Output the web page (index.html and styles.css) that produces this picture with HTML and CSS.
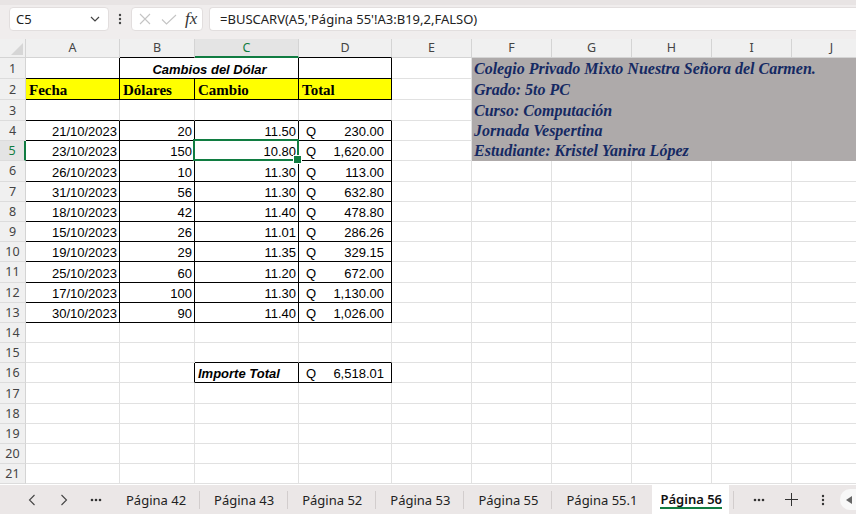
FILE: index.html
```html
<!DOCTYPE html>
<html>

<head>
  <meta content="width=device-width, initial-scale=1">
  <link rel="stylesheet" href="styles.css">
</head>

<body>
  <div class="topbar">
    <div class="namebox">
      <span>C5</span>
      <svg width="10" height="6" viewBox="0 0 10 6"><path d="M1 1l4 4 4-4" fill="none" stroke="#444" stroke-width="1.2"/></svg>
    </div>
    <div class="vdots">
      <svg width="4" height="12" viewBox="0 0 4 12"><circle cx="2" cy="2" r="1.2" fill="#444"/><circle cx="2" cy="6" r="1.2" fill="#444"/><circle cx="2" cy="10" r="1.2" fill="#444"/></svg>
    </div>
    <div class="fxbox">
      <svg width="12" height="12" viewBox="0 0 12 12"><path d="M1 1l10 10M11 1L1 11" stroke="#c4c4c4" stroke-width="1.1"/></svg>
      <svg width="16" height="11" viewBox="0 0 16 11"><path d="M1 5.5l4.5 4.5L15 1" fill="none" stroke="#c4c4c4" stroke-width="1.1"/></svg>
      <span class="fx">fx</span>
    </div>
    <div class="formula">=BUSCARV(A5,'Página 55'!A3:B19,2,FALSO)</div>
  </div>

  <div class="sheet">
    <div class="grid">
      <!-- column headers -->
      <div class="corner"></div>
      <div class="ch">A</div>
      <div class="ch dark">B</div>
      <div class="ch on">C</div>
      <div class="ch dark">D</div>
      <div class="ch">E</div>
      <div class="ch">F</div>
      <div class="ch">G</div>
      <div class="ch">H</div>
      <div class="ch">I</div>
      <div class="ch">J</div>

      <!-- 1 -->
      <div class="rh">1</div>
      <div class="c kr kb"></div>
      <div class="c kr kb ttl mid span2">Cambios del Dólar</div>
      <div class="c kr kb"></div>
      <div class="c"></div>
      <div class="info">Colegio Privado Mixto Nuestra Señora del Carmen.</div>

      <!-- 2 -->
      <div class="rh">2</div>
      <div class="c kr kb y hd">Fecha</div>
      <div class="c kr kb y hd">Dólares</div>
      <div class="c kr kb y hd">Cambio</div>
      <div class="c kr kb y hd">Total</div>
      <div class="c"></div>
      <div class="info">Grado: 5to PC</div>

      <!-- 3 -->
      <div class="rh">3</div>
      <div class="c kb"></div>
      <div class="c kb"></div>
      <div class="c kb"></div>
      <div class="c kb"></div>
      <div class="c"></div>
      <div class="info">Curso: Computación</div>

      <!-- 4 -->
      <div class="rh">4</div>
      <div class="c kr kb r">21/10/2023</div>
      <div class="c kr kb r">20</div>
      <div class="c kr kb r">11.50</div>
      <div class="c kr kb acc"><span>Q</span><span>230.00</span></div>
      <div class="c"></div>
      <div class="info">Jornada Vespertina</div>

      <!-- 5 -->
      <div class="rh on">5</div>
      <div class="c kr kb r">23/10/2023</div>
      <div class="c kr kb r">150</div>
      <div class="c kr kb r sel">10.80</div>
      <div class="c kr kb acc"><span>Q</span><span>1,620.00</span></div>
      <div class="c"></div>
      <div class="info">Estudiante: Kristel Yanira López</div>

      <!-- 6 -->
      <div class="rh">6</div>
      <div class="c kr kb r">26/10/2023</div>
      <div class="c kr kb r">10</div>
      <div class="c kr kb r">11.30</div>
      <div class="c kr kb acc"><span>Q</span><span>113.00</span></div>
      <div class="c"></div><div class="c"></div><div class="c"></div><div class="c"></div><div class="c"></div><div class="c"></div>

      <!-- 7 -->
      <div class="rh">7</div>
      <div class="c kr kb r">31/10/2023</div>
      <div class="c kr kb r">56</div>
      <div class="c kr kb r">11.30</div>
      <div class="c kr kb acc"><span>Q</span><span>632.80</span></div>
      <div class="c"></div><div class="c"></div><div class="c"></div><div class="c"></div><div class="c"></div><div class="c"></div>

      <!-- 8 -->
      <div class="rh">8</div>
      <div class="c kr kb r">18/10/2023</div>
      <div class="c kr kb r">42</div>
      <div class="c kr kb r">11.40</div>
      <div class="c kr kb acc"><span>Q</span><span>478.80</span></div>
      <div class="c"></div><div class="c"></div><div class="c"></div><div class="c"></div><div class="c"></div><div class="c"></div>

      <!-- 9 -->
      <div class="rh">9</div>
      <div class="c kr kb r">15/10/2023</div>
      <div class="c kr kb r">26</div>
      <div class="c kr kb r">11.01</div>
      <div class="c kr kb acc"><span>Q</span><span>286.26</span></div>
      <div class="c"></div><div class="c"></div><div class="c"></div><div class="c"></div><div class="c"></div><div class="c"></div>

      <!-- 10 -->
      <div class="rh">10</div>
      <div class="c kr kb r">19/10/2023</div>
      <div class="c kr kb r">29</div>
      <div class="c kr kb r">11.35</div>
      <div class="c kr kb acc"><span>Q</span><span>329.15</span></div>
      <div class="c"></div><div class="c"></div><div class="c"></div><div class="c"></div><div class="c"></div><div class="c"></div>

      <!-- 11 -->
      <div class="rh">11</div>
      <div class="c kr kb r">25/10/2023</div>
      <div class="c kr kb r">60</div>
      <div class="c kr kb r">11.20</div>
      <div class="c kr kb acc"><span>Q</span><span>672.00</span></div>
      <div class="c"></div><div class="c"></div><div class="c"></div><div class="c"></div><div class="c"></div><div class="c"></div>

      <!-- 12 -->
      <div class="rh">12</div>
      <div class="c kr kb r">17/10/2023</div>
      <div class="c kr kb r">100</div>
      <div class="c kr kb r">11.30</div>
      <div class="c kr kb acc"><span>Q</span><span>1,130.00</span></div>
      <div class="c"></div><div class="c"></div><div class="c"></div><div class="c"></div><div class="c"></div><div class="c"></div>

      <!-- 13 -->
      <div class="rh">13</div>
      <div class="c kr kb r">30/10/2023</div>
      <div class="c kr kb r">90</div>
      <div class="c kr kb r">11.40</div>
      <div class="c kr kb acc"><span>Q</span><span>1,026.00</span></div>
      <div class="c"></div><div class="c"></div><div class="c"></div><div class="c"></div><div class="c"></div><div class="c"></div>

      <!-- 14 -->
      <div class="rh">14</div>
      <div class="c"></div><div class="c"></div><div class="c"></div><div class="c"></div><div class="c"></div>
      <div class="c"></div><div class="c"></div><div class="c"></div><div class="c"></div><div class="c"></div>

      <!-- 15 -->
      <div class="rh">15</div>
      <div class="c"></div><div class="c"></div><div class="c kb"></div><div class="c kb"></div><div class="c"></div>
      <div class="c"></div><div class="c"></div><div class="c"></div><div class="c"></div><div class="c"></div>

      <!-- 16 -->
      <div class="rh">16</div>
      <div class="c"></div>
      <div class="c kr"></div>
      <div class="c kr kb ttl">Importe Total</div>
      <div class="c kr kb acc"><span>Q</span><span>6,518.01</span></div>
      <div class="c"></div>
      <div class="c"></div><div class="c"></div><div class="c"></div><div class="c"></div><div class="c"></div>

      <!-- 17 -->
      <div class="rh">17</div>
      <div class="c"></div><div class="c"></div><div class="c"></div><div class="c"></div><div class="c"></div>
      <div class="c"></div><div class="c"></div><div class="c"></div><div class="c"></div><div class="c"></div>

      <!-- 18 -->
      <div class="rh">18</div>
      <div class="c"></div><div class="c"></div><div class="c"></div><div class="c"></div><div class="c"></div>
      <div class="c"></div><div class="c"></div><div class="c"></div><div class="c"></div><div class="c"></div>

      <!-- 19 -->
      <div class="rh">19</div>
      <div class="c"></div><div class="c"></div><div class="c"></div><div class="c"></div><div class="c"></div>
      <div class="c"></div><div class="c"></div><div class="c"></div><div class="c"></div><div class="c"></div>

      <!-- 20 -->
      <div class="rh">20</div>
      <div class="c"></div><div class="c"></div><div class="c"></div><div class="c"></div><div class="c"></div>
      <div class="c"></div><div class="c"></div><div class="c"></div><div class="c"></div><div class="c"></div>

      <!-- 21 -->
      <div class="rh">21</div>
      <div class="c"></div><div class="c"></div><div class="c"></div><div class="c"></div><div class="c"></div>
      <div class="c"></div><div class="c"></div><div class="c"></div><div class="c"></div><div class="c"></div>
    </div>
  </div>

  <div class="tabs">
    <span class="nav"><svg width="8" height="12" viewBox="0 0 8 12"><path d="M6.5 1L1.5 6l5 5" fill="none" stroke="#444" stroke-width="1.1"/></svg></span>
    <span class="nav"><svg width="8" height="12" viewBox="0 0 8 12"><path d="M1.5 1l5 5-5 5" fill="none" stroke="#444" stroke-width="1.1"/></svg></span>
    <span class="nav"><svg width="12" height="4" viewBox="0 0 12 4"><circle cx="2" cy="2" r="1.3" fill="#333"/><circle cx="6" cy="2" r="1.3" fill="#333"/><circle cx="10" cy="2" r="1.3" fill="#333"/></svg></span>
    <span class="tab">Página 42</span><span class="sep"></span>
    <span class="tab">Página 43</span><span class="sep"></span>
    <span class="tab">Página 52</span><span class="sep"></span>
    <span class="tab">Página 53</span><span class="sep"></span>
    <span class="tab">Página 55</span><span class="sep"></span>
    <span class="tab">Página 55.1</span>
    <span class="tab active"><span>Página 56</span></span>
    <span class="sep gap"></span>
    <span class="nav"><svg width="12" height="4" viewBox="0 0 12 4"><circle cx="2" cy="2" r="1.3" fill="#333"/><circle cx="6" cy="2" r="1.3" fill="#333"/><circle cx="10" cy="2" r="1.3" fill="#333"/></svg></span>
    <span class="nav"><svg width="13" height="13" viewBox="0 0 13 13"><path d="M6.5 0v13M0 6.5h13" stroke="#333" stroke-width="1"/></svg></span>
    <span class="nav"><svg width="4" height="12" viewBox="0 0 4 12"><circle cx="2" cy="2" r="1.2" fill="#333"/><circle cx="2" cy="6" r="1.2" fill="#333"/><circle cx="2" cy="10" r="1.2" fill="#333"/></svg></span>
    <span class="pill"><svg width="6" height="8" viewBox="0 0 6 8"><path d="M6 0v8L0 4z" fill="#666"/></svg></span>
  </div>
</body>

</html>
```

FILE: styles.css
```css
* {
  box-sizing: border-box;
}

body {
  margin: 0;
  width: 856px;
  height: 514px;
  overflow: hidden;
  background: #fff;
  font-family: "Noto Sans", sans-serif;
  color: #222;
}

/* formula bar */
.topbar {
  height: 39px;
  background: #f0eded;
  border-top: 5px solid #e8e4e4;
  display: flex;
  align-items: flex-start;
  padding: 2px 0 0 9px;
}

.namebox {
  width: 100px;
  height: 24px;
  background: #fff;
  border: 1px solid #e2dede;
  border-radius: 4px;
  display: flex;
  align-items: center;
  justify-content: space-between;
  padding: 0 8px 0 6px;
  font-size: 13px;
}

.vdots {
  width: 22px;
  height: 24px;
  display: flex;
  align-items: center;
  justify-content: center;
}

.fxbox {
  width: 72px;
  height: 24px;
  background: #fff;
  border: 1px solid #e2dede;
  border-radius: 4px;
  display: flex;
  align-items: center;
  gap: 10px;
  padding-left: 7px;
}

.fx {
  font-family: "Liberation Serif", serif;
  font-style: italic;
  font-size: 17px;
  color: #333;
  margin-left: -2px;
}

.formula {
  flex: 1;
  height: 24px;
  margin-left: 6px;
  background: #fff;
  border: 1px solid #e2dede;
  border-right: none;
  border-radius: 4px 0 0 4px;
  padding-left: 10px;
  font-size: 13px;
  line-height: 22px;
  white-space: nowrap;
}

/* sheet grid */
.sheet {
  height: 446px;
  overflow: hidden;
}

.grid {
  width: 872px;
  display: grid;
  grid-template-columns: 26px 94px 75px 104px 93px repeat(6, 80px);
  grid-template-rows: 19px repeat(3, 21px) repeat(18, 20.2px);
}

.corner {
  background: #f0f0f0;
  border-right: 1px solid #d4d4d4;
  border-bottom: 1px solid #d4d4d4;
  position: relative;
}

.corner:after {
  content: "";
  position: absolute;
  right: 2px;
  bottom: 2px;
  border-left: 12px solid transparent;
  border-bottom: 12px solid #d6d6d6;
}

.ch {
  background: #f0f0f0;
  border-right: 1px solid #d4d4d4;
  border-bottom: 1px solid #d4d4d4;
  text-align: center;
  font-size: 12.5px;
  line-height: 18px;
  color: #444;
}

.ch.dark {
  border-bottom-color: #000;
}

.ch.on {
  background: #e4e4e4;
  color: #107c41;
  border-bottom: 2px solid #107c41;
}

.rh {
  background: #f0f0f0;
  border-right: 1px solid #d4d4d4;
  border-bottom: 1px solid #dcdcdc;
  display: flex;
  align-items: center;
  justify-content: center;
  font-size: 12.5px;
  color: #444;
}

.rh.on {
  background: #e4e4e4;
  color: #107c41;
  border-right: 2px solid #107c41;
}

.c {
  border-right: 1px solid #e1e1e1;
  border-bottom: 1px solid #e1e1e1;
  display: flex;
  align-items: flex-end;
  padding: 0 2px;
  font-family: "Liberation Sans", sans-serif;
  font-size: 13px;
  line-height: 16px;
  color: #000;
  white-space: nowrap;
  overflow: hidden;
}

.kr {
  border-right-color: #000;
}

.kb {
  border-bottom-color: #000;
}

.r {
  justify-content: flex-end;
}

.mid {
  justify-content: center;
}

.span2 {
  grid-column: span 2;
}

.y {
  background: #ffff00;
}

.hd {
  font-family: "Liberation Serif", serif;
  font-weight: bold;
  font-size: 15px;
  line-height: 17px;
  padding-left: 3px;
}

.ttl {
  font-weight: bold;
  font-style: italic;
  padding-left: 3px;
}

.acc {
  justify-content: space-between;
  padding: 0 7px;
}

.sel {
  position: relative;
  overflow: visible;
  z-index: 1;
}

.sel:after {
  content: "";
  position: absolute;
  left: -2px;
  top: -2px;
  right: -1px;
  bottom: -1px;
  border: 2px solid #107c41;
}

.sel:before {
  content: "";
  position: absolute;
  right: -4px;
  bottom: -4px;
  width: 7px;
  height: 7px;
  background: #107c41;
  border: 1px solid #fff;
  z-index: 2;
}

.info {
  grid-column: span 5;
  background: #aeaaaa;
  color: #152963;
  font-family: "Liberation Serif", serif;
  font-weight: bold;
  font-style: italic;
  font-size: 16px;
  line-height: 18px;
  display: flex;
  align-items: flex-end;
  padding: 0 0 1px 2px;
  white-space: nowrap;
}

/* sheet tabs */
.tabs {
  height: 29px;
  background: #ebe7e7;
  display: flex;
  align-items: center;
  padding-left: 16px;
  font-size: 13px;
  color: #222;
  white-space: nowrap;
}

.nav {
  width: 32px;
  height: 29px;
  display: flex;
  align-items: center;
  justify-content: center;
  flex: none;
}

.tab {
  padding: 0 13px 0 14px;
  flex: none;
}

.sep {
  width: 1px;
  height: 18px;
  background: #d2cdcd;
  flex: none;
}

.sep.gap {
  margin: 0 9px 0 4px;
}

.tab.active {
  align-self: stretch;
  background: #fff;
  display: flex;
  align-items: flex-end;
  padding: 0 7px 5px 8px;
  margin-left: 2px;
  font-weight: 600;
  color: #111;
}

.tab.active span {
  line-height: 16px;
  border-bottom: 2px solid #107c41;
}

.pill {
  margin-left: 1px;
  width: 30px;
  height: 21px;
  background: #f8f8f8;
  border-radius: 10px 0 0 10px;
  display: flex;
  align-items: center;
  padding-left: 6px;
  flex: none;
}
```
